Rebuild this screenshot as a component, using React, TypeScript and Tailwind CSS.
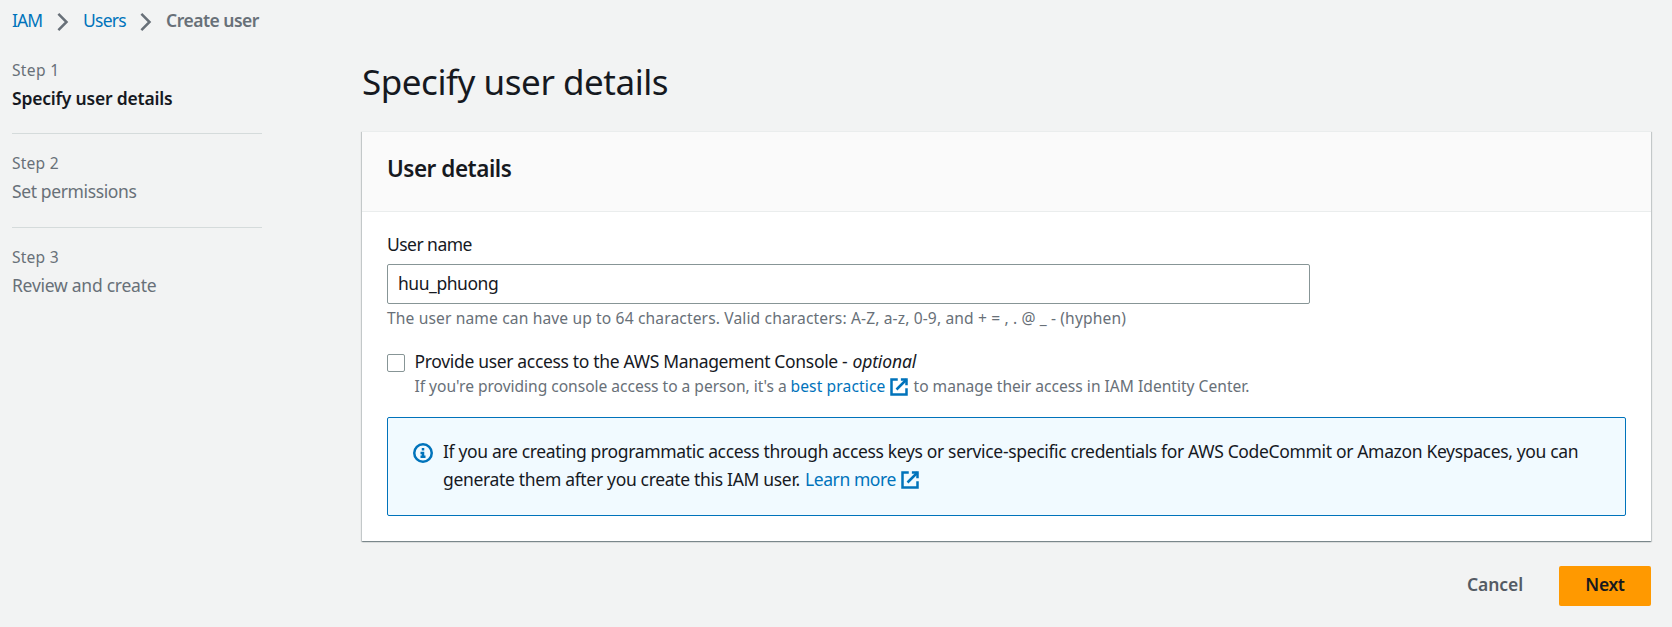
import { useState } from 'react';

function Chevron() {
  return (
    <svg viewBox="0 0 16 16" className="mt-[4px] h-5 w-5 shrink-0" fill="none" stroke="#687078" strokeWidth="2">
      <path d="M3.5 1.5L10 8l-6.5 6.5" />
    </svg>
  );
}

function ExternalIcon() {
  return (
    <svg viewBox="0 0 16 16" className="h-5 w-5 shrink-0" fill="none" stroke="#0073bb" strokeWidth="2">
      <path d="M9.5 2H14v4.5" />
      <path d="M6 10l8-8" />
      <path d="M14 9v5H2V2h5" />
    </svg>
  );
}

function InfoIcon() {
  return (
    <svg viewBox="0 0 16 16" className="h-5 w-5 shrink-0" fill="none" stroke="#0073bb" strokeWidth="2">
      <circle cx="8" cy="8" r="7" />
      <path d="M8 11V8H6" />
      <path d="M10 11H6" />
      <path d="M8 4v2" />
    </svg>
  );
}

export default function App() {
  const [name, setName] = useState('huu_phuong');
  return (
    <div className="h-[627px] w-[1672px] overflow-hidden bg-[#f2f3f3] pl-3 font-['Noto_Sans','Liberation_Sans',sans-serif] text-[17.5px] leading-7 text-[#16191f]">
      <nav className="flex items-center pt-1.5 whitespace-nowrap">
        <a className="w-[42px] tracking-[-0.9px] text-[#0073bb]">IAM</a>
        <Chevron />
        <a className="ml-[9px] w-[54px] tracking-[-0.74px] text-[#0073bb]">Users</a>
        <Chevron />
        <span className="ml-[9px] font-semibold tracking-[-0.5px] text-[#687078]">Create user</span>
      </nav>

      <div className="flex">
        <aside className="mt-[26px] w-[250px] text-[#687078]">
          <div className="border-b border-[#d5dbdb] pb-[21px]">
            <div className="text-[15.6px] leading-5 tracking-[0.3px]">Step 1</div>
            <div className="mt-1 font-semibold tracking-[-0.2px] text-[#16191f]">Specify user details</div>
          </div>
          <div className="border-b border-[#d5dbdb] pt-[19px] pb-[22px]">
            <div className="text-[15.6px] leading-5 tracking-[0.2px]">Step 2</div>
            <div className="mt-1 tracking-[-0.38px]">Set permissions</div>
          </div>
          <div className="pt-[19px]">
            <div className="text-[15.6px] leading-5 tracking-[0.2px]">Step 3</div>
            <div className="mt-1 tracking-[-0.26px]">Review and create</div>
          </div>
        </aside>

        <main className="mt-[26px] ml-[100px] w-[1289px]">
          <h1 className="text-[35px] leading-[44px] tracking-[-0.46px]">Specify user details</h1>

          <section className="mt-[27px] bg-white shadow-[0_1px_1px_0_rgba(0,28,36,0.3),1px_1px_1px_0_rgba(0,28,36,0.15),-1px_1px_1px_0_rgba(0,28,36,0.15)]">
            <header className="h-[81px] border-y border-[#eaeded] bg-[#fafafa] px-[25px] pt-[23px]">
              <h2 className="text-[22.5px] font-semibold tracking-[-0.48px]">User details</h2>
            </header>
            <div className="px-[25px] pt-[18px] pb-[25px]">
              <label className="block tracking-[-0.54px]">User name</label>
              <input
                value={name}
                onChange={(e) => setName(e.target.value)}
                className="mt-[6px] block h-10 w-[923px] rounded-[2px] border border-[#879596] bg-white px-[10px] pb-[2px] tracking-[-0.45px] outline-none"
              />
              <p className="mt-1 text-[15.6px] leading-5 tracking-[0.13px] whitespace-nowrap text-[#687078]">
                The user name can have up to 64 characters. Valid characters: A-Z, a-z, 0-9, and + = , . @ _ - (hyphen)
              </p>

              <div className="mt-[19px] flex whitespace-nowrap">
                <span className="mt-[7px] h-[18px] w-[18px] rounded-[2px] border border-[#879596] bg-white" />
                <div className="ml-[9.5px]">
                  <div className="flex">
                    <span className="w-[438px] tracking-[-0.33px]">Provide user access to the AWS Management Console -</span>
                    <em className="tracking-[-0.14px]">optional</em>
                  </div>
                  <div className="mt-px flex text-[15.6px] leading-5 text-[#687078]">
                    <span className="w-[376px] tracking-[-0.034px]">If you're providing console access to a person, it's a</span>
                    <a className="flex w-[123px] justify-between text-[#0073bb]">
                      <span className="tracking-[0.114px]">best practice</span>
                      <span className="mt-px mr-[4.5px]"><ExternalIcon /></span>
                    </a>
                    <span>to manage their access in IAM Identity Center.</span>
                  </div>
                </div>
              </div>

              <div className="mt-5 flex h-[99px] rounded-[2px] border border-[#0073bb] bg-[#f1faff] pt-[19px] pl-[25px] whitespace-nowrap">
                <span className="mt-[6px]"><InfoIcon /></span>
                <div className="ml-[10px]">
                  <div className="tracking-[-0.342px]">
                    If you are creating programmatic access through access keys or service-specific credentials for AWS CodeCommit or Amazon Keyspaces, you can
                  </div>
                  <div className="flex">
                    <span className="w-[362px] tracking-[-0.322px]">generate them after you create this IAM user.</span>
                    <a className="flex text-[#0073bb]">
                      <span className="w-[95px] tracking-[-0.42px]">Learn more</span>
                      <span className="mt-[5px]"><ExternalIcon /></span>
                    </a>
                  </div>
                </div>
              </div>
            </div>
          </section>

          <div className="mt-[25px] flex justify-end font-semibold">
            <button className="mr-9 h-10 pb-[4px] tracking-[-0.1px] text-[#545b64]">Cancel</button>
            <button className="h-10 w-[92px] rounded-[2px] bg-[#ff9900] pb-[4px] tracking-[-0.35px] text-[#16191f]">Next</button>
          </div>
        </main>
      </div>
    </div>
  );
}
